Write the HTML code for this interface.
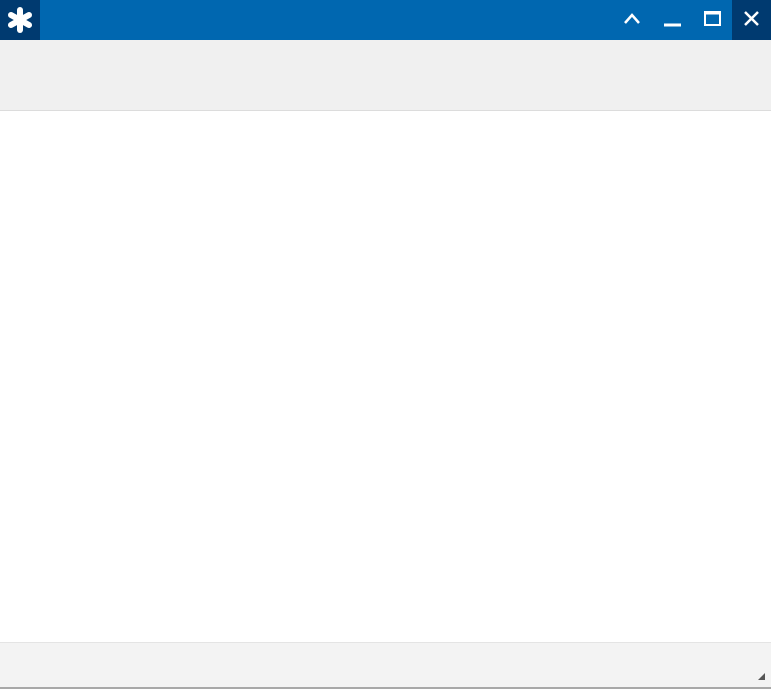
<!DOCTYPE html>
<html><head><style>
body{margin:0;width:771px;height:689px;overflow:hidden;background:#fff;font-family:"Liberation Sans",sans-serif;position:relative}
div{position:absolute;box-sizing:border-box}
</style></head><body>
<div style="left:0;top:0;width:771px;height:40px;background:#0067b0"></div>
<div style="left:0;top:0;width:40px;height:40px;background:#003a70"></div>
<svg style="position:absolute;left:6px;top:6px" width="28" height="28" viewBox="0 0 28 28"><g stroke="#fff" stroke-width="6" stroke-linecap="round"><line x1="14" y1="4" x2="14" y2="24"/><line x1="5" y1="9" x2="23" y2="19"/><line x1="5" y1="19" x2="23" y2="9"/></g></svg>
<div style="left:732px;top:0;width:39px;height:40px;background:#003a70"></div>
<svg style="position:absolute;left:620px;top:8px" width="150" height="24" viewBox="620 8 150 24">
<polyline points="625,23 632,15 639,23" fill="none" stroke="#fff" stroke-width="2.5"/>
<line x1="664" y1="25" x2="681" y2="25" stroke="#fff" stroke-width="3"/>
<rect x="705" y="12" width="15" height="13" fill="none" stroke="#fff" stroke-width="2"/>
<line x1="705" y1="13" x2="720" y2="13" stroke="#fff" stroke-width="3"/>
<g stroke="#fff" stroke-width="2.5"><line x1="745" y1="12" x2="758" y2="25"/><line x1="758" y1="12" x2="745" y2="25"/></g>
</svg>
<div style="left:0;top:40px;width:771px;height:71px;background:#f0f0f0;border-bottom:1px solid #dcdcdc"></div>
<div style="left:0;top:642px;width:771px;height:47px;background:#f3f3f3;border-top:1px solid #e4e4e4;border-bottom:2px solid #a8a8a8"></div>
<svg style="position:absolute;left:757px;top:672px" width="10" height="10"><polygon points="8,1 8,8 1,8" fill="#555"/></svg>
</body></html>
